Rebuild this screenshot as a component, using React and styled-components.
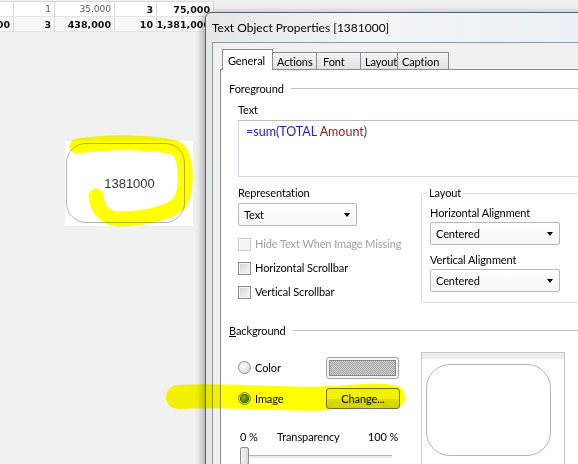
import React from "react";
import styled, { createGlobalStyle } from "styled-components";

const GlobalStyle = createGlobalStyle`
  * { box-sizing: border-box; }
  html, body { margin: 0; padding: 0; }
  body { background: #f1f1f1; overflow: hidden; }
`;

const Page = styled.div`
  position: relative;
  width: 578px;
  height: 464px;
  overflow: hidden;
  background: #f1f1f1;
  isolation: isolate;
`;

// sheet behind the dialog
const Table = styled.div`
  display: grid;
  grid-template-columns: 14px 41px 60px 42px 57px;
  width: 214px;
  margin-top: 1px;
  border-top: 1px solid #d8d8d8;
  font-family: "DejaVu Sans", Verdana, sans-serif;
`;

const Cell = styled.div`
  height: 15px;
  display: flex;
  justify-content: flex-end;
  align-items: center;
  overflow: hidden;
  white-space: nowrap;
  padding-right: 3px;
  background: ${(p) => (p.$total ? "#f7f7f7" : "#fff")};
  border-right: 1px solid #d9d9d9;
  border-bottom: 1px solid #e4e4e4;
  font-size: ${(p) => (p.$bold ? 9.5 : 9)}px;
  font-weight: ${(p) => (p.$bold ? 700 : 400)};
  color: ${(p) => (p.$bold ? "#111" : "#5a5a5a")};
`;

const TextCard = styled.div`
  width: 128px;
  height: 85px;
  margin: 109px 0 0 65px;
  padding: 2px 0 0 1px;
  background: #fff;
`;

const RoundedValue = styled.div`
  width: 119px;
  height: 80px;
  display: flex;
  align-items: center;
  justify-content: center;
  padding-left: 8px;
  border: 1.5px solid #b4b4b4;
  border-radius: 20px;
  font-family: "Liberation Sans", Arial, sans-serif;
  font-size: 13px;
  color: #333;
`;

const Dialog = styled.div`
  position: absolute;
  left: 205px;
  top: 12px;
  width: 390px;
  height: 470px;
  display: flex;
  flex-direction: column;
  border: 1px solid #56606b;
  border-radius: 6px 6px 0 0;
  background: linear-gradient(to right, #e4e6e8, #f3f4f5 40%, #eaf0f6);
  box-shadow: -3px 0 7px rgba(0, 0, 0, 0.28);
  font-family: Lato, "Liberation Sans", sans-serif;
  font-size: 11px;
  letter-spacing: -0.1px;
  color: #000;
`;

const TitleBar = styled.div`
  height: 29px;
  display: flex;
  align-items: center;
  padding-left: 6px;
  font-size: 12px;
  letter-spacing: 0;
`;

const Client = styled.div`
  flex: 1;
  display: flex;
  flex-direction: column;
  margin-left: 6px;
  padding: 6px 0 0 7px;
  border-left: 1px solid #8e969f;
  border-top: 1px solid #8e969f;
  background: #f0f0f0;
`;

const TabStrip = styled.div`
  position: relative;
  z-index: 2;
  display: flex;
  align-items: flex-end;
  height: 20px;
  padding-left: 2px;
`;

const Tab = styled.div`
  position: relative;
  z-index: ${(p) => (p.$active ? 2 : 1)};
  width: ${(p) => p.$w}px;
  height: ${(p) => (p.$active ? 21 : 17)}px;
  margin-bottom: ${(p) => (p.$active ? -1 : 0)}px;
  margin-left: ${(p) => (p.$first ? 0 : -1)}px;
  display: flex;
  align-items: center;
  padding-left: ${(p) => p.$pl}px;
  border: 1px solid #898c95;
  border-bottom: none;
  background: ${(p) =>
    p.$active ? "#fff" : "linear-gradient(#f4f4f4, #e2e2e2)"};
  white-space: nowrap;
`;

const Panel = styled.div`
  flex: 1;
  padding: 10px 0 0 8px;
  border: 1px solid #898c95;
  background: #fff;
`;

const GroupHeader = styled.div`
  display: flex;
  align-items: center;
  gap: 7px;
  height: 16px;
  margin-top: ${(p) => p.$mt || 0}px;
  &::after {
    content: "";
    flex: 1;
    height: 1px;
    background: #c2c2c2;
  }
`;

const Indent = styled.div`
  padding-left: 9px;
`;

const Label = styled.div`
  height: 16px;
  line-height: 16px;
  margin-top: ${(p) => p.$mt || 0}px;
  color: ${(p) => (p.$disabled ? "#a0a0a0" : "#000")};
  white-space: nowrap;
`;

const TextBox = styled.div`
  height: 57px;
  margin-top: 2px;
  padding: 3px 7px;
  border: 1px solid #d3d6db;
  border-top-color: #b9bcc2;
  font-size: 12.5px;
  letter-spacing: 0;
  line-height: 16px;
`;

const Tok = styled.span`
  color: ${(p) => p.$c};
`;

const TwoCol = styled.div`
  display: flex;
  align-items: flex-start;
  margin-top: ${(p) => p.$mt}px;
`;

const LeftCol = styled.div`
  width: 183px;
  padding-top: ${(p) => p.$pt || 0}px;
`;

const Select = styled.div`
  width: ${(p) => p.$w}px;
  height: 23px;
  margin-top: ${(p) => p.$mt || 0}px;
  display: flex;
  align-items: center;
  justify-content: space-between;
  padding: 0 6px 0 5px;
  border: 1px solid #b9b9b9;
  border-radius: 2px;
  background: linear-gradient(#ffffff, #f5f5f5);
  &::after {
    content: "";
    border-left: 3.5px solid transparent;
    border-right: 3.5px solid transparent;
    border-top: 4px solid #000;
  }
`;

const CheckList = styled.div`
  margin-top: 6px;
`;

const CheckRow = styled.div`
  height: 24px;
  display: flex;
  align-items: center;
  gap: 4px;
`;

const Box = styled.span`
  width: 13px;
  height: 13px;
  flex: none;
  border: 1px solid ${(p) => (p.$disabled ? "#c8c8c8" : "#8e8f8f")};
  background: ${(p) =>
    p.$disabled ? "#f4f4f4" : "linear-gradient(135deg, #cfd1d4, #f8f8f8)"};
  box-shadow: inset 0 0 0 1px ${(p) => (p.$disabled ? "#f8f8f8" : "#f1f1f1")};
`;

const LayoutGroup = styled.fieldset`
  width: 172px;
  margin: 0;
  padding: 0 0 10px 8px;
  border: 1px solid #d5dbe0;
  border-radius: 3px;
  legend {
    padding: 0 2px;
    margin-left: -3px;
    line-height: 16px;
  }
`;

const OptionRow = styled.div`
  display: flex;
  align-items: center;
  height: ${(p) => p.$h}px;
  margin-top: ${(p) => p.$mt || 0}px;
`;

const RadioOption = styled.div`
  width: 88px;
  display: flex;
  align-items: center;
  gap: 4px;
`;

const Radio = styled.span`
  width: 13px;
  height: 13px;
  flex: none;
  display: flex;
  align-items: center;
  justify-content: center;
  border-radius: 50%;
  border: 1px solid #8e8f8f;
  background: radial-gradient(circle at 40% 35%, #fbfbfb, #cfcfcf);
  &::after {
    content: "";
    display: ${(p) => (p.$on ? "block" : "none")};
    width: 7px;
    height: 7px;
    border-radius: 50%;
    background: radial-gradient(circle at 40% 35%, #8cc0ff, #1d58b4);
    box-shadow: 0 0 0 1px #2a4f86;
  }
`;

const SwatchButton = styled.div`
  width: 73px;
  height: 22px;
  padding: 2px;
  border: 1px solid #a3a3a3;
  border-radius: 3px;
  background: #f4f4f4;
`;

const Swatch = styled.div`
  height: 100%;
  border: 1px solid #8a8a8a;
  background: repeating-conic-gradient(#9b9b9b 0 25%, #dadada 0 50%) 0 0 /
    2px 2px;
`;

const Button = styled.div`
  width: 74px;
  height: 21px;
  display: flex;
  align-items: center;
  justify-content: center;
  border: 1px solid #707070;
  border-radius: 3px;
  background: linear-gradient(#f2f2f2 50%, #dedede 50%, #d0d0d0);
`;

const ScaleRow = styled.div`
  display: flex;
  height: 16px;
  line-height: 16px;
  margin-top: 21px;
  span {
    white-space: nowrap;
  }
`;

const ScaleLabel = styled.span`
  width: ${(p) => p.$w}px;
  padding-left: ${(p) => p.$pl || 0}px;
`;

const Slider = styled.div`
  display: flex;
  align-items: center;
  height: 18px;
  margin-top: 2px;
  padding-left: 2px;
`;

const Thumb = styled.span`
  width: 9px;
  height: 18px;
  border: 1px solid #8d8d8d;
  border-radius: 2px;
  background: linear-gradient(to right, #f7f7f7, #d9d9d9);
`;

const Track = styled.span`
  width: 143px;
  height: 3px;
  border-top: 1px solid #b3b3b3;
  background: #e9e9e9;
`;

const Preview = styled.div`
  width: 144px;
  height: 120px;
  padding: 11px 0 0 4px;
  border: 1px solid #c6c6c6;
  background: #fff;
  box-shadow: inset 0 6px 0 #ececec;
`;

const PreviewShape = styled.div`
  width: 125px;
  height: 92px;
  border: 1.5px solid #b4b4b4;
  border-radius: 24px;
`;

const Marker = styled.svg`
  position: absolute;
  left: 0;
  top: 0;
  z-index: 5;
  pointer-events: none;
  mix-blend-mode: multiply;
`;

const rows = [
  ["", "1", "35,000", "3", "75,000"],
  ["1,381,000", "3", "438,000", "10", "1,381,000"],
];

const tabs = [
  ["General", 51, 5],
  ["Actions", 45, 4],
  ["Font", 45, 6],
  ["Layout", 38, 4],
  ["Caption", 52, 4],
];

export default function App() {
  return (
    <Page>
      <GlobalStyle />
      <Table>
        {rows.map((r, ri) =>
          r.map((v, ci) => (
            <Cell
              key={ri + "-" + ci}
              $total={ri === 1}
              $bold={ri === 1 || ci >= 3}
            >
              {v}
            </Cell>
          ))
        )}
      </Table>
      <TextCard>
        <RoundedValue>1381000</RoundedValue>
      </TextCard>

      <Dialog>
        <TitleBar>Text Object Properties [1381000]</TitleBar>
        <Client>
          <TabStrip>
            {tabs.map(([t, w, pl], i) => (
              <Tab key={t} $w={w} $pl={pl} $active={i === 0} $first={i === 0}>
                {t}
              </Tab>
            ))}
          </TabStrip>
          <Panel>
            <GroupHeader>Foreground</GroupHeader>
            <Indent>
              <Label $mt={6}>Text</Label>
              <TextBox>
                <Tok $c="#2323c8">=sum(TOTAL </Tok>
                <Tok $c="#8a1c1c">Amount</Tok>
                <Tok $c="#333366">)</Tok>
              </TextBox>
              <TwoCol $mt={8}>
                <LeftCol>
                  <Label>Representation</Label>
                  <Select $w={119} $mt={2}>Text</Select>
                  <CheckList>
                    <CheckRow>
                      <Box $disabled />
                      <Label $disabled>Hide Text When Image Missing</Label>
                    </CheckRow>
                    <CheckRow>
                      <Box />
                      <Label>Horizontal Scrollbar</Label>
                    </CheckRow>
                    <CheckRow>
                      <Box />
                      <Label>Vertical Scrollbar</Label>
                    </CheckRow>
                  </CheckList>
                </LeftCol>
                <LayoutGroup>
                  <legend>Layout</legend>
                  <Label $mt={4}>Horizontal Alignment</Label>
                  <Select $w={130} $mt={1}>Centered</Select>
                  <Label $mt={7}>Vertical Alignment</Label>
                  <Select $w={130} $mt={1}>Centered</Select>
                </LayoutGroup>
              </TwoCol>
            </Indent>

            <GroupHeader $mt={18}>
              <span>
                <u>B</u>ackground
              </span>
            </GroupHeader>
            <Indent>
              <TwoCol $mt={14}>
                <LeftCol $pt={5}>
                  <OptionRow $h={21}>
                    <RadioOption>
                      <Radio />
                      <span>Color</span>
                    </RadioOption>
                    <SwatchButton>
                      <Swatch />
                    </SwatchButton>
                  </OptionRow>
                  <OptionRow $h={20} $mt={10}>
                    <RadioOption>
                      <Radio $on />
                      <span>Image</span>
                    </RadioOption>
                    <Button>Change...</Button>
                  </OptionRow>
                  <ScaleRow>
                    <ScaleLabel $w={39} $pl={2}>
                      0 %
                    </ScaleLabel>
                    <ScaleLabel $w={91}>Transparency</ScaleLabel>
                    <ScaleLabel $w={40}>100 %</ScaleLabel>
                  </ScaleRow>
                  <Slider>
                    <Thumb />
                    <Track />
                  </Slider>
                </LeftCol>
                <Preview>
                  <PreviewShape />
                </Preview>
              </TwoCol>
            </Indent>
          </Panel>
        </Client>
      </Dialog>

      <Marker width="578" height="464" viewBox="0 0 578 464">
        <path
          d="M 77 146 C 110 142, 150 141, 176 148 C 188 156, 187 190, 180 202 C 170 214, 140 219, 118 219 C 104 218, 97 208, 96 196"
          fill="none"
          stroke="#ffff00"
          strokeWidth="15"
          strokeLinecap="round"
          strokeLinejoin="round"
        />
        <path
          d="M 178 397 C 230 394, 290 401, 330 398 S 380 395, 393 397"
          fill="none"
          stroke="#ffff00"
          strokeWidth="24"
          strokeLinecap="round"
        />
      </Marker>
    </Page>
  );
}
